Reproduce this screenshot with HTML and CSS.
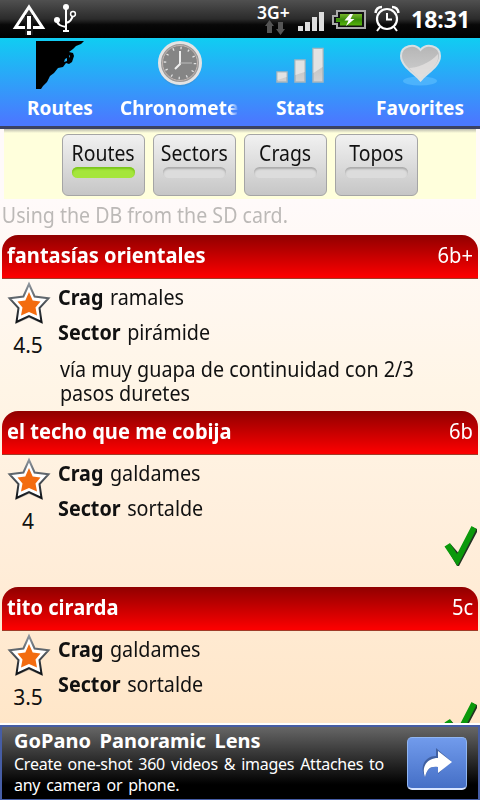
FILE: index.html
```html
<!DOCTYPE html>
<html lang="en">
<head>
    <meta charset="UTF-8">
    <meta name="viewport" content="width=device-width, initial-scale=1.0">
    <title>Routes</title>
    <link rel="stylesheet" href="styles.css">
</head>
<body>

    <!-- shared icons -->
    <svg class="defs" width="0" height="0">
        <defs>
            <linearGradient id="silver" x1="0" y1="0" x2="0" y2="1">
                <stop offset="0" stop-color="#b5b5b5"/>
                <stop offset="1" stop-color="#d2d2d2"/>
            </linearGradient>
            <linearGradient id="bars" x1="0" y1="0" x2="0" y2="1">
                <stop offset="0" stop-color="#e2e2e2"/>
                <stop offset="1" stop-color="#b2b2b6"/>
            </linearGradient>
            <linearGradient id="starEdge" x1="0" y1="0" x2="0" y2="1">
                <stop offset="0" stop-color="#8c949c"/>
                <stop offset="1" stop-color="#101418"/>
            </linearGradient>
            <linearGradient id="battery" x1="0" y1="0" x2="0" y2="1">
                <stop offset="0" stop-color="#77b52c"/>
                <stop offset="0.5" stop-color="#398c08"/>
                <stop offset="1" stop-color="#57b50c"/>
            </linearGradient>
        </defs>
        <symbol id="star" viewBox="0 0 44 46">
            <path d="M22 5 L27.5 17 L42 18 L32 27.5 L36 43 L22 37 L8.500 43 L12 27.500 L2 18 L16.500 17 Z" fill="#555" opacity="0.35"/>
            <path d="M22 3 L27.600 15.500 L41.500 17.300 L32.500 27 L34.500 41 L22 35 L9.500 41 L11.500 27 L2.500 17.300 L16.400 15.500 Z" fill="#fff" stroke="url(#starEdge)" stroke-width="2"/>
            <path d="M22 11 L25.700 19.500 L33.500 20.500 L28.500 26.500 L30 34.500 L22 31 L14 34.500 L15.500 26.500 L10.500 20.500 L18.300 19.500 Z" fill="#f36c10"/>
        </symbol>
        <symbol id="check" viewBox="0 0 34 42">
            <path d="M2 22 L7 19.500 L14.500 28 L28.500 2 L33 4 V7 L15 41 H13 Z" fill="#232"/>
            <path d="M0.500 21.500 L6 18 L13 29 L27.500 1 L32.500 4 L13.500 41 Z" fill="#0b990b"/>
        </symbol>
    </svg>

    <header class="status">
        <svg class="status-left" width="90" height="38" viewBox="0 0 90 38">
            <path d="M29 7 L42.500 27.500 H15.500 Z" fill="none" stroke="#fff" stroke-width="3"/>
            <path d="M25 15 H33 V35 H25 Z" fill="#191919"/>
            <path d="M27 16 H31 V29 H27 Z M27 31 H31 V35 H27 Z" fill="#fff"/>
            <path d="M66 7 V30 M66 27 C61 26 57 25 57 20 M66 23 C70 22 72 20 73 15" fill="none" stroke="#fff" stroke-width="2"/>
            <circle cx="66" cy="7" r="3" fill="#fff"/>
            <circle cx="57" cy="20" r="3" fill="#fff"/>
            <circle cx="73" cy="14" r="2.400" fill="#222" stroke="#fff" stroke-width="1.500"/>
            <path d="M63 30 H69 V32 H63 Z" fill="#fff"/>
        </svg>
        <div class="status-right">
            <div class="network">
                <span>3G+</span>
                <svg width="22" height="15" viewBox="0 0 22 15">
                    <path d="M5.500 0 L10 6 H8 V13 H3 V6 H1 Z M16.500 15 L21 9 H19 V2 H14 V9 H12 Z" fill="#555"/>
                </svg>
            </div>
            <svg class="signal" width="27" height="20" viewBox="0 0 27 20">
                <path d="M0 14 H5 V19 H0 Z M7 10 H12 V19 H7 Z M14 5 H19 V19 H14 Z M21 0 H26 V19 H21 Z" fill="#ddd"/>
            </svg>
            <svg class="battery" width="34" height="20" viewBox="0 0 34 20">
                <path d="M5 1 H33 V18 H5 V14 H1 V6 H5 Z" fill="#111" stroke="#aaa" stroke-width="2"/>
                <path d="M8 4 H30 V15.500 H8 V12 H4 V8 H8 Z" fill="url(#battery)"/>
                <path d="M18 4 L12.500 10.500 H16.500 L14 16 L22.500 9 H18.500 L21 4 Z" fill="#fff"/>
            </svg>
            <svg class="alarm" width="26" height="27" viewBox="0 0 26 27">
                <circle cx="13" cy="14" r="10" fill="none" stroke="#fff" stroke-width="2.200"/>
                <path d="M13 8 V14.500 H18 M6 22 L3 26 M20 22 L23 26" fill="none" stroke="#fff" stroke-width="2"/>
                <path d="M1.500 8 C2 4 4 2 8 2 M24.500 8 C24 4 22 2 18 2" fill="none" stroke="#fff" stroke-width="2.500"/>
            </svg>
            <span class="time">18:31</span>
        </div>
    </header>

    <nav>
        <a class="tab" href="#">
            <svg width="48" height="48" viewBox="0 0 48 48">
                <path d="M0 0 H48 L45 3 L40 5 L37 8 L33 11 L37 12 L38 15 L36 21 L33 23 L30 22 L27 26 L22 27 L18 32 L14 35 L11 41 L7 45 L5 48 H0 Z" fill="#000"/>
                <path d="M29 18 L31 17 L31 20 L28 21 Z M33 14 L34 15 L33 17 Z" fill="#20aff6"/>
            </svg>
            <span>Routes</span>
        </a>
        <a class="tab tab-fade" href="#">
            <svg width="48" height="48" viewBox="0 0 48 48">
                <circle cx="24" cy="24.500" r="21" fill="#3a8fce" opacity="0.6"/>
                <circle cx="24" cy="22" r="20.500" fill="#999" stroke="#e3e3e3" stroke-width="3"/>
                <circle cx="24" cy="22" r="17.500" fill="#858585" stroke="#c1b5b1" stroke-width="1"/>
                <circle cx="24" cy="22" r="15" fill="none" stroke="#e0e0e0" stroke-width="2.500" stroke-dasharray="1.300 6.554"/>
                <path d="M24 10 V23 L19 28" fill="none" stroke="#eee" stroke-width="2"/>
                <path d="M24 22 H36" stroke="#bbb" stroke-width="1"/>
            </svg>
            <span>Chronomete</span>
        </a>
        <a class="tab" href="#">
            <svg width="48" height="48" viewBox="0 0 48 48">
                <path d="M1 31 H11 V41 H1 Z M19 19 H29 V41 H19 Z M37 7.500 H47 V41 H37 Z" fill="url(#silver)" stroke="#a7b5bd" stroke-width="1.500"/>
                <path d="M1.500 31.500 H10.500 V36 L1.500 39 Z M19.500 19.500 H28.500 V31 L19.500 34 Z M37.500 8 H46.500 V26 L37.500 32 Z" fill="#e2e2e2"/>
            </svg>
            <span>Stats</span>
        </a>
        <a class="tab" href="#">
            <svg width="48" height="48" viewBox="0 0 48 48">
                <ellipse cx="24" cy="40" rx="17" ry="4.500" fill="#69c6ff" opacity="0.5"/>
                <path d="M24.500 39.500 C18 32 5 25 5 15 C5 4 19 2 24.500 9 C30 2 44 4 44 15 C44 25 31 32 24.500 39.500 Z" fill="url(#silver)" stroke="#d9dfe2" stroke-width="2"/>
                <path d="M13 27 C20 27 33 23 42 13 C44 23 34 29 24.500 38 Z" fill="#e5e3e1" opacity="0.75"/>
            </svg>
            <span>Favorites</span>
        </a>
    </nav>

    <div class="toggles">
        <button class="toggle on"><span>Routes</span><i></i></button>
        <button class="toggle"><span>Sectors</span><i></i></button>
        <button class="toggle"><span>Crags</span><i></i></button>
        <button class="toggle"><span>Topos</span><i></i></button>
    </div>

    <p class="notice">Using the DB from the SD card.</p>

    <main class="routes">
        <article class="route">
            <h2><span>fantasías orientales</span><em>6b+</em></h2>
            <div class="route-body">
                <div class="rating"><svg width="44" height="46"><use href="#star"/></svg><span>4.5</span></div>
                <div class="info">
                    <p><b>Crag</b> ramales</p>
                    <p><b>Sector</b> pirámide</p>
                    <p class="comment">vía muy guapa de continuidad con 2/3<br>pasos duretes</p>
                </div>
            </div>
        </article>
        <article class="route">
            <h2><span>el techo que me cobija</span><em>6b</em></h2>
            <div class="route-body">
                <div class="rating"><svg width="44" height="46"><use href="#star"/></svg><span>4</span></div>
                <div class="info">
                    <p><b>Crag</b> galdames</p>
                    <p><b>Sector</b> sortalde</p>
                </div>
                <svg class="check" width="34" height="42"><use href="#check"/></svg>
            </div>
        </article>
        <article class="route">
            <h2><span>tito cirarda</span><em>5c</em></h2>
            <div class="route-body">
                <div class="rating"><svg width="44" height="46"><use href="#star"/></svg><span>3.5</span></div>
                <div class="info">
                    <p><b>Crag</b> galdames</p>
                    <p><b>Sector</b> sortalde</p>
                </div>
                <svg class="check" width="34" height="42"><use href="#check"/></svg>
            </div>
        </article>
    </main>

    <footer class="ad">
        <div class="ad-text">
            <strong>GoPano Panoramic Lens</strong>
            <p>Create one-shot 360 videos &amp; images Attaches to<br>any camera or phone.</p>
        </div>
        <a class="ad-button" href="#">
            <svg width="32" height="32" viewBox="0 0 32 32">
                <path d="M15 1 L30 14 L17 27 V20 C9 19 6 23 4 30 C-2 20 4 9 15 9 Z" fill="#334f88" opacity="0.7"/>
                <path d="M17 4 L31 15 L17 26 V20 C9 19 6 22 4 30 C0 20 6 11 17 11 Z" fill="#fff"/>
            </svg>
        </a>
    </footer>

</body>
</html>
```
FILE: styles.css
```css
* {
    box-sizing: border-box;
    margin: 0;
    padding: 0;
}
body {
    width: 480px;
    height: 800px;
    overflow: hidden;
    display: flex;
    flex-direction: column;
    font-family: 'Noto Sans', 'Open Sans', sans-serif;
    font-size: 21px;
    color: #111;
    background: linear-gradient(#fffafa 200px, #fff5e6 390px, #ffeedb 540px, #ffe6c8 725px);
}
svg {
    display: block;
}
.defs {
    position: absolute;
}
.status {
    height: 38px;
    flex: none;
    display: flex;
    justify-content: space-between;
    background: linear-gradient(#505050, #2b2b2b 50%, #080808 65%, #000);
    color: #fff;
}
.status-right {
    display: flex;
    align-items: flex-start;
    padding-right: 10px;
}
.network {
    width: 37px;
    font-size: 17.5px;
    font-weight: 600;
    line-height: 20px;
    padding-top: 2px;
}
.network svg {
    margin: -2px 0 0 7px;
}
.signal {
    margin: 12px 0 0 4px;
}
.battery {
    margin: 10px 0 0 7px;
}
.alarm {
    margin: 5px 0 0 8px;
}
.time {
    width: 59px;
    margin-left: 11px;
    font-size: 23px;
    font-weight: bold;
    line-height: 38px;
}
nav {
    height: 91px;
    flex: none;
    display: grid;
    grid-template-columns: repeat(4, 120px);
    background: linear-gradient(#10cdf2, #4a79ff 95%);
    border-bottom: 3px solid #3b4262;
}
.tab {
    display: flex;
    flex-direction: column;
    align-items: center;
    padding-top: 3px;
    overflow: hidden;
    color: #fff;
    text-decoration: none;
    font-size: 19px;
    font-weight: bold;
    line-height: 26px;
}
.tab span {
    margin-top: 6px;
}
.tab-fade {
    align-items: flex-start;
}
.tab-fade svg {
    margin-left: 36px;
}
.tab-fade span {
    width: 119px;
    mask-image: linear-gradient(to right, #000 92%, transparent);
}
.toggles {
    height: 70px;
    flex: none;
    margin: 0 4px;
    padding-top: 5px;
    display: flex;
    justify-content: center;
    gap: 8px;
    background: linear-gradient(#bcbcae, #ffffdc 4px);
}
.toggle {
    width: 83px;
    height: 62px;
    padding-top: 4px;
    display: flex;
    flex-direction: column;
    align-items: center;
    border: 1px solid #a5a5a5;
    border-radius: 6px;
    background: linear-gradient(#f1f1f1, #c6c6c6);
    font: inherit;
    line-height: 28px;
    color: #111;
}
.toggle span {
    transform: scaleX(0.925);
}
.toggle i {
    width: 63px;
    height: 11px;
    border-radius: 6px;
    background: #dcdcdc;
    box-shadow: inset 0 2px 2px #aaa;
}
.toggle.on i {
    background: #a5e63c;
    box-shadow: inset 0 2px 2px #79c41b;
}
.notice {
    height: 36px;
    flex: none;
    padding-left: 2px;
    line-height: 33px;
    color: #bcb9b7;
    transform: scaleX(0.933);
    transform-origin: left;
}
.routes {
    height: 490px;
    flex: none;
    overflow: hidden;
    padding: 0 2px;
    border-bottom: 2px solid #fff;
}
.route {
    height: 176px;
}
.route h2 {
    height: 44px;
    display: flex;
    justify-content: space-between;
    padding: 0 5px;
    border-radius: 16px 16px 0 0;
    border-bottom: 1px solid #a13b28;
    background: linear-gradient(#900000, #fb0000 97%);
    color: #fff;
    font-size: 21px;
    line-height: 41px;
}
.route h2 span {
    transform: scaleX(0.957);
    transform-origin: left;
}
.route em {
    font-style: normal;
    font-weight: normal;
    transform: scaleX(0.96);
    transform-origin: right;
}
.route-body {
    height: 132px;
    display: flex;
}
.rating {
    width: 56px;
    padding: 2px 0 0 5px;
}
.rating span {
    display: block;
    width: 42px;
    text-align: center;
    line-height: 36px;
}
.info {
    flex: 1;
    line-height: 35px;
    padding-top: 1px;
    white-space: nowrap;
}
.info p {
    word-spacing: 1.5px;
    transform: scaleX(0.94);
    transform-origin: left;
}
.info .comment {
    padding: 7px 0 0 2px;
    line-height: 24px;
    word-spacing: 0;
}
.check {
    align-self: flex-end;
    margin-bottom: 20px;
}
.ad {
    height: 75px;
    flex: none;
    display: flex;
    justify-content: space-between;
    padding: 0 11px 0 12px;
    border: 2px solid #465da5;
    border-bottom-width: 1px;
    background: linear-gradient(#666, #000 80%);
    color: #fff;
}
.ad-text strong {
    display: block;
    font-size: 20px;
    line-height: 27px;
    word-spacing: 3.5px;
}
.ad-text p {
    font-size: 16px;
    line-height: 21px;
    word-spacing: 2px;
    letter-spacing: -0.25px;
    white-space: nowrap;
}
.ad-button {
    width: 60px;
    height: 53px;
    margin-top: 10px;
    display: flex;
    align-items: center;
    justify-content: center;
    border-radius: 5px;
    border: 1px solid #91b6f2;
    border-bottom: 2px solid #d7e4ff;
    background: linear-gradient(#719bec, #456fc6);
}
```
